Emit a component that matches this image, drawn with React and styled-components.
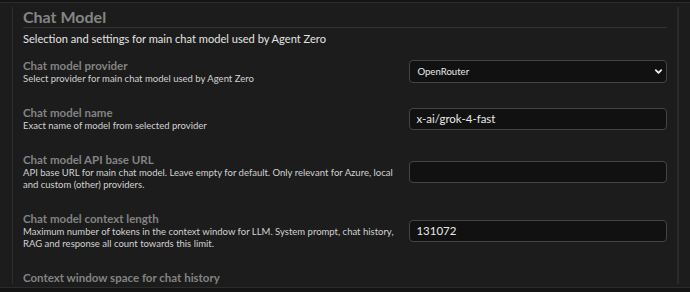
import styled, { createGlobalStyle } from 'styled-components';

const GlobalStyle = createGlobalStyle`
  html, body {
    margin: 0;
    padding: 0;
    background: #141414;
  }
  body {
    font-family: Lato, "Noto Sans", sans-serif;
  }
`;

const fields = [
  {
    id: 'provider',
    title: 'Chat model provider',
    description: 'Select provider for main chat model used by Agent Zero',
    type: 'select',
    value: 'OpenRouter',
  },
  {
    id: 'name',
    title: 'Chat model name',
    description: 'Exact name of model from selected provider',
    type: 'text',
    value: 'x-ai/grok-4-fast',
  },
  {
    id: 'api_base',
    title: 'Chat model API base URL',
    description:
      'API base URL for main chat model. Leave empty for default. Only relevant for Azure, local and custom (other) providers.',
    type: 'text',
    value: '',
  },
  {
    id: 'ctx_length',
    title: 'Chat model context length',
    description:
      'Maximum number of tokens in the context window for LLM. System prompt, chat history, RAG and response all count towards this limit.',
    type: 'text',
    value: '131072',
  },
  {
    id: 'ctx_history',
    title: 'Context window space for chat history',
    description: '',
    type: 'none',
  },
];

const ChevronDown = () => (
  <svg width="9" height="9" viewBox="0 0 10 10" fill="none">
    <path d="M2 3.5 L5 6.5 L8 3.5" stroke="#f0f0f0" strokeWidth="2" strokeLinecap="round" strokeLinejoin="round" />
  </svg>
);

const App = () => {
  return (
    <>
      <GlobalStyle />
      <Frame>
        <Panel>
          <Viewport>
            <Section>
              <SectionTitle>Chat Model</SectionTitle>
              <SectionDescription>
                Selection and settings for main chat model used by Agent Zero
              </SectionDescription>
              {fields.map((field) => (
                <FieldRow key={field.id}>
                  <FieldText>
                    <FieldTitle>{field.title}</FieldTitle>
                    {field.description && (
                      <FieldDescription>{field.description}</FieldDescription>
                    )}
                  </FieldText>
                  {field.type === 'select' && (
                    <FieldControl>
                      <Select defaultValue={field.value}>
                        <option>{field.value}</option>
                      </Select>
                      <Chevron>
                        <ChevronDown />
                      </Chevron>
                    </FieldControl>
                  )}
                  {field.type === 'text' && (
                    <FieldControl>
                      <Input type="text" defaultValue={field.value} />
                    </FieldControl>
                  )}
                </FieldRow>
              ))}
            </Section>
          </Viewport>
        </Panel>
      </Frame>
    </>
  );
};

export default App;

const Frame = styled.div`
  height: 292px;
  padding-top: 2px;
  box-sizing: border-box;
  background: #141414;
`;

const Panel = styled.div`
  height: 286px;
  box-sizing: border-box;
  background: #1c1c1c;
  border-top: 1px solid #2c2c2c;
  border-bottom: 1px solid #2c2c2c;
  padding: 4px 11px 3px 12px;
`;

const Viewport = styled.div`
  height: 100%;
  overflow: hidden;
`;

const Section = styled.div`
  border-left: 1px solid #2e2e2e;
  border-right: 2px solid #2a2a2a;
  padding: 0 10px;
  min-height: 100%;
  box-sizing: border-box;
`;

const SectionTitle = styled.h2`
  margin: 0;
  font-size: 16px;
  line-height: 19px;
  font-weight: 700;
  color: #858585;
  border-bottom: 1px solid #333;
  padding-bottom: 1px;
`;

const SectionDescription = styled.p`
  margin: 3px 0 0;
  font-size: 11.1px;
  line-height: 16px;
  color: #e4e4e4;
`;

const FieldRow = styled.div`
  display: flex;
  align-items: center;
  padding: 11px 0 9px;
`;

const FieldText = styled.div`
  flex: 1;
  padding-right: 12px;
`;

const FieldTitle = styled.div`
  font-size: 11.5px;
  line-height: 15px;
  font-weight: 700;
  color: #838383;
`;

const FieldDescription = styled.div`
  font-size: 9.5px;
  line-height: 12px;
  color: #d2d2d2;
`;

const FieldControl = styled.div`
  position: relative;
  width: 40%;
  flex-shrink: 0;
  display: flex;
`;

const Select = styled.select`
  appearance: none;
  width: 100%;
  height: 23px;
  box-sizing: border-box;
  background: #111;
  color: #e8e8e8;
  border: 1px solid #444;
  border-radius: 4px;
  padding: 0 7px;
  font-family: Lato, "Noto Sans", sans-serif;
  font-size: 9.6px;
  outline: none;
`;

const Chevron = styled.span`
  position: absolute;
  right: 4px;
  top: 7px;
  display: flex;
  pointer-events: none;
`;

const Input = styled.input`
  width: 100%;
  height: 22px;
  box-sizing: border-box;
  background: #111;
  color: #e8e8e8;
  border: 1px solid #444;
  border-radius: 4px;
  padding: 0 6px;
  font-family: Lato, "Noto Sans", sans-serif;
  font-size: 11.5px;
  outline: none;
`;
